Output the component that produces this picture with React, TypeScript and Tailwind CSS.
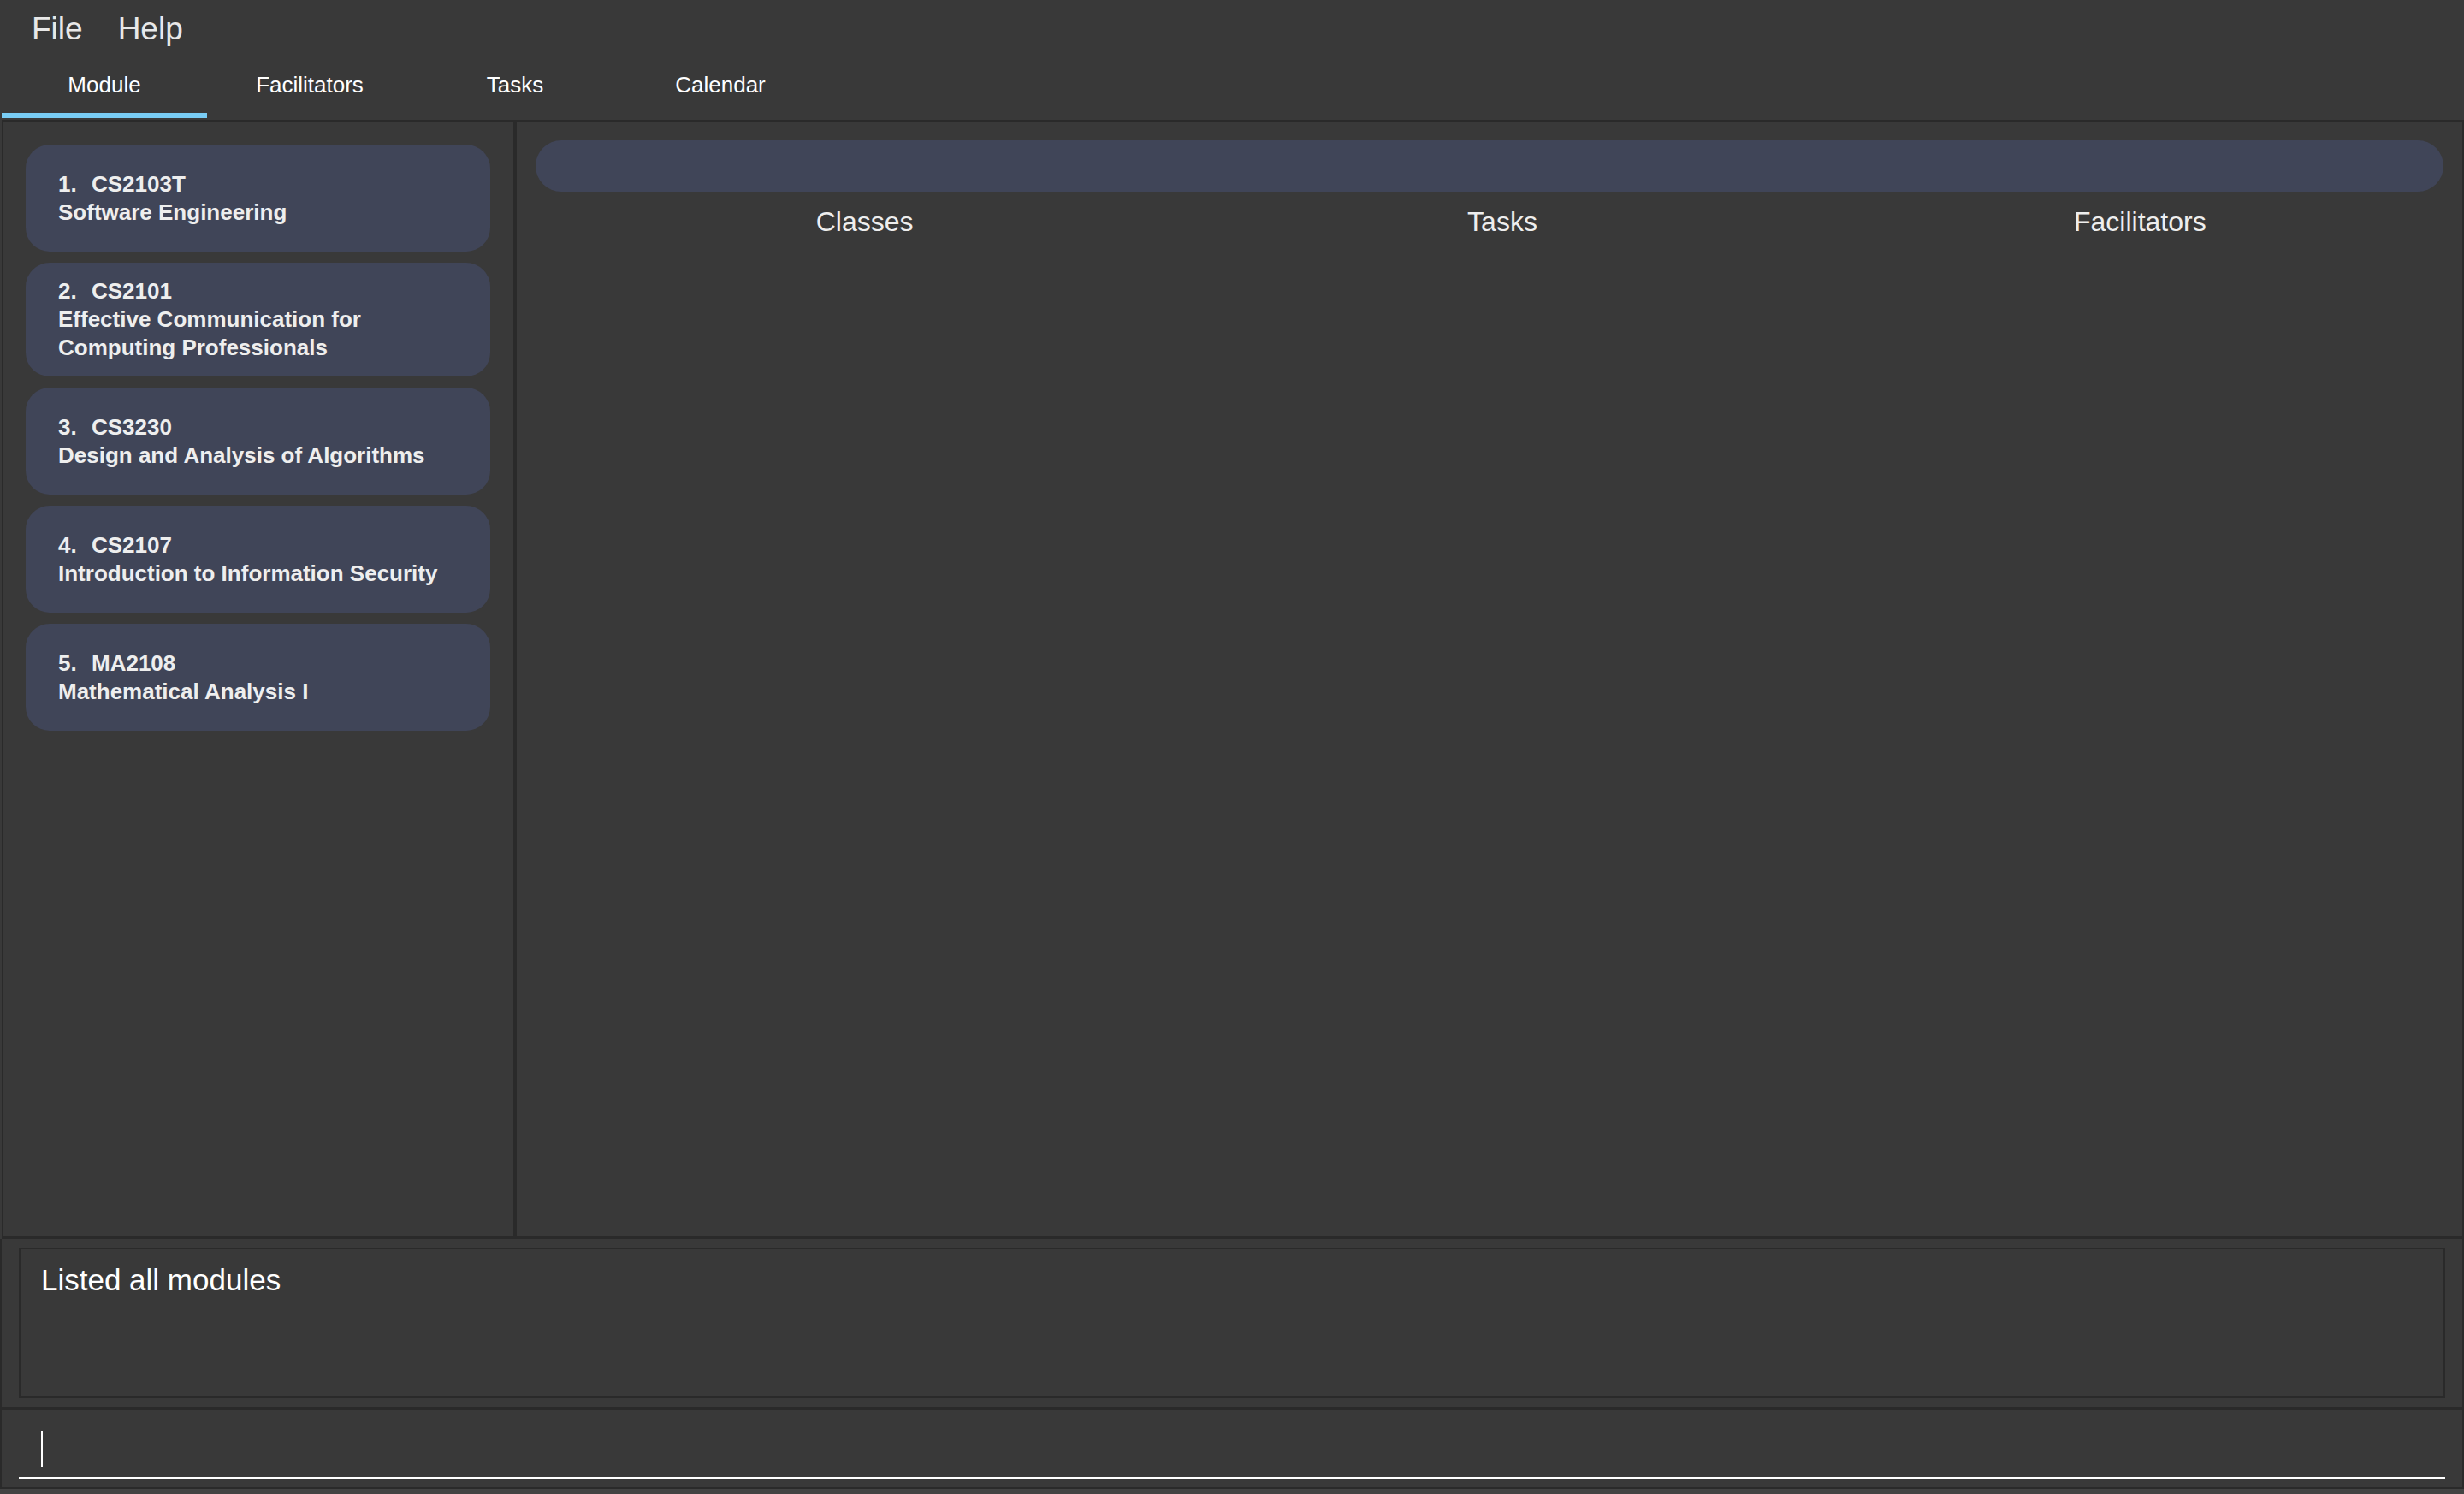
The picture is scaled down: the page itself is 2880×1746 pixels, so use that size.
import React from "react"

const tabs = ["Module", "Facilitators", "Tasks", "Calendar"]

const modules = [
  { code: "CS2103T", name: "Software Engineering" },
  { code: "CS2101", name: "Effective Communication for Computing Professionals" },
  { code: "CS3230", name: "Design and Analysis of Algorithms" },
  { code: "CS2107", name: "Introduction to Information Security" },
  { code: "MA2108", name: "Mathematical Analysis I" },
]

function ModuleCard({ index, code, name }: { index: number; code: string; name: string }) {
  return (
    <div className="flex min-h-[125px] flex-col justify-center rounded-[28px] bg-[#404558] py-[17px] pl-[38px] pr-[60px] text-[26px] font-bold leading-[33px] text-[#eeeeee]">
      <div className="flex">
        <span className="w-[39px]">{index}.</span>
        <span>{code}</span>
      </div>
      <div>{name}</div>
    </div>
  )
}

export default function App() {
  return (
    <div className="flex h-[1746px] w-full flex-col overflow-hidden bg-[#393939] font-['Liberation_Sans',Arial,sans-serif]">
      {/* menu bar */}
      <div className="flex h-[64px] gap-[41px] pl-[37px] pt-[15px] text-[37px] leading-[37px] text-[#e8e8e8]">
        <span>File</span>
        <span>Help</span>
      </div>

      {/* tabs */}
      <div className="flex h-[76px] pl-[2px]">
        {tabs.map((t, i) => (
          <div key={t} className="flex w-[240px] flex-col items-center pt-[22px]">
            <span className="text-[26px] leading-[26px] text-white">{t}</span>
            <div className="flex-1" />
            <div className={i === 0 ? "mb-[2px] h-[6px] w-full bg-[#79cdf5]" : "mb-[2px] h-[6px] w-full"} />
          </div>
        ))}
      </div>

      {/* main split */}
      <div className="ml-[2px] flex h-[1308px] border-x-2 border-b-4 border-t-2 border-[#2a2a2a]">
        <div className="flex w-[596px] flex-col gap-[13px] pl-[26px] pr-[27px] pt-[27px]">
          {modules.map((m, i) => (
            <ModuleCard key={m.code} index={i + 1} code={m.code} name={m.name} />
          ))}
        </div>
        <div className="w-[4px] bg-[#2a2a2a]" />
        <div className="flex flex-1 flex-col">
          <div className="mx-[22px] mt-[22px] h-[60px] rounded-full bg-[#404558]" />
          <div className="mt-[19px] grid grid-cols-3 pl-[34px] pr-[4px] text-[32px] leading-[32px] text-[#eeeeee]">
            <div className="text-center">Classes</div>
            <div className="text-center">Tasks</div>
            <div className="text-center">Facilitators</div>
          </div>
        </div>
      </div>

      {/* result display */}
      <div className="h-[200px] border-x-2 border-b-4 border-[#2a2a2a] px-[20px] pb-[10px] pt-[10px]">
        <div className="h-full border-2 border-[#2a2a2a] pl-[24px] pt-[18px] text-[35px] leading-[35px] text-white">
          Listed all modules
        </div>
      </div>

      {/* command box */}
      <div className="h-[92px] border-x-2 border-b-2 border-[#2a2a2a] px-[20px] pt-[8px]">
        <div className="h-[72px] border-b-2 border-white pl-[26px] pt-[16px]">
          <div className="h-[42px] w-[2px] bg-white" />
        </div>
      </div>
      <div className="flex-1 bg-[#434343]" />
    </div>
  )
}
